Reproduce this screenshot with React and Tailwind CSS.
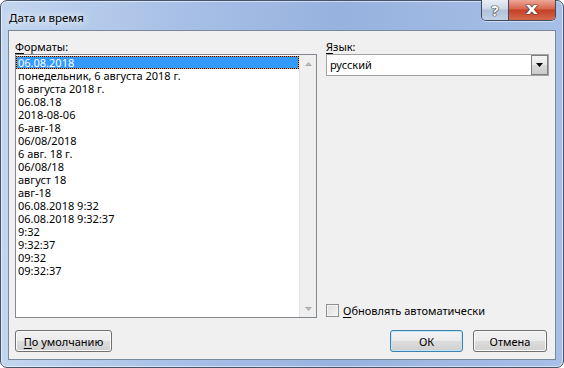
import React from "react";

const items = [
  "06.08.2018",
  "понедельник, 6 августа 2018 г.",
  "6 августа 2018 г.",
  "06.08.18",
  "2018-08-06",
  "6-авг-18",
  "06/08/2018",
  "6 авг. 18 г.",
  "06/08/18",
  "август 18",
  "авг-18",
  "06.08.2018 9:32",
  "06.08.2018 9:32:37",
  "9:32",
  "9:32:37",
  "09:32",
  "09:32:37",
];

function Arrow({ down }) {
  return (
    <svg width="7" height="4" viewBox="0 0 7 4" className={down ? "rotate-180" : ""}>
      <polygon points="3.5,0 7,4 0,4" fill="#a8a8a8" />
      <polygon points="3.5,1 5.5,3 1.5,3" fill="#bdbdbd" />
    </svg>
  );
}

function Btn({ children, def, className }) {
  return (
    <div
      className={`h-[22px] rounded-[3px] border ${
        def
          ? "border-[#3c7fb1] shadow-[inset_0_0_0_1px_#bfe6fb]"
          : "border-[#707070] shadow-[inset_0_0_0_1px_#fbfbfb]"
      } bg-[linear-gradient(to_bottom,#f2f2f2_0%,#ebebeb_50%,#dddddd_50%,#cfcfcf_100%)] flex items-center justify-center text-[11px] leading-[15px] text-black ${className}`}
    >
      {children}
    </div>
  );
}

export default function App() {
  return (
    <div className="w-[564px] h-[368px] bg-white font-['Noto_Sans','Open_Sans',sans-serif] text-[11px] text-black">
      <div className="w-full h-full rounded-[7px] border border-[#44546c] shadow-[inset_0_0_0_1px_rgba(255,255,255,0.55)] bg-[linear-gradient(90deg,#c3d6ef_0%,#a9c1e7_30%,#97b2df_60%,#a6bfe6_100%)] px-[7px] pb-[7px] flex flex-col">
        {/* Title bar */}
        <div className="h-[29px] flex justify-between items-start">
          <div className="pl-px mt-[9px] leading-[15px] text-[11.5px] text-black [text-shadow:0_0_6px_rgba(255,255,255,0.95),0_0_10px_rgba(255,255,255,0.8)]">
            Дата и время
          </div>
          <div className="-mt-px flex h-[21px] rounded-b-[5px] border border-t-0 border-[#3d4a5e] overflow-hidden shadow-[0_1px_0_rgba(255,255,255,0.5)]">
            <div className="w-[27px] h-full flex items-center justify-center bg-[linear-gradient(to_bottom,#e8eef6_0%,#cdd8e7_45%,#b0c1d8_50%,#c3d2e6_100%)] border-r border-[#3d4a5e] text-white font-bold text-[15px] leading-none [text-shadow:0_0_1px_#222,0_0_1px_#222,0_0_1px_#222]">
              ?
            </div>
            <div className="w-[46px] h-full flex items-center justify-center bg-[linear-gradient(to_bottom,#eba797_0%,#d8654d_45%,#c43f26_50%,#d66a4c_100%)] text-white font-bold text-[15px] leading-none [text-shadow:0_0_1px_#222,0_0_1px_#222,0_0_1px_#222]">
              <span className="font-['DejaVu_Sans',sans-serif] scale-x-125 -mt-[2px]">x</span>
            </div>
          </div>
        </div>

        {/* Client area */}
        <div className="flex-1 border border-[#7a889c] bg-[#f0f0f0] flex flex-col pt-[8px] pl-[6px] pr-[6px] pb-[7px]">
          <div className="flex-1 grid grid-cols-[302px_223px] gap-x-[9px]">
            {/* Left column */}
            <div className="flex flex-col">
              <div className="h-[15px] leading-[15px]">
                <span className="underline underline-offset-2">Ф</span>
                <span>орматы:</span>
              </div>
              <div className="h-[264px] border border-[#828790] bg-white flex">
                <div className="flex-1 pt-px">
                  {items.map((t, i) =>
                    i === 0 ? (
                      <div
                        key={i}
                        className="h-[13px] border border-dotted border-black bg-[#f29a2e]"
                      >
                        <div className="h-full bg-[#3399ff] text-white leading-[11px] pl-px whitespace-nowrap">
                          {t}
                        </div>
                      </div>
                    ) : (
                      <div key={i} className="h-[13px] leading-[13px] pl-[2px] whitespace-nowrap">
                        {t}
                      </div>
                    )
                  )}
                </div>
                <div className="w-[17px] bg-[#efefef] border-l border-[#e4e4e4] flex flex-col justify-between">
                  <div className="h-[17px] flex items-center justify-center">
                    <Arrow />
                  </div>
                  <div className="h-[17px] flex items-center justify-center">
                    <Arrow down />
                  </div>
                </div>
              </div>
            </div>

            {/* Right column */}
            <div className="flex flex-col">
              <div className="h-[15px] leading-[15px]">
                <span className="underline underline-offset-2">Я</span>
                <span>зык:</span>
              </div>
              <div className="h-[22px] border border-[#a3a3a3] bg-white flex items-stretch">
                <div className="flex-1 pl-[3px] leading-[20px]">русский</div>
                <div className="w-[17px] border border-[#7d7d7d] bg-[linear-gradient(to_bottom,#f4f4f4_0%,#e8e8e8_50%,#d9d9d9_50%,#cbcbcb_100%)] flex items-center justify-center">
                  <svg width="7" height="4" viewBox="0 0 7 4">
                    <polygon points="0,0 7,0 3.5,4" fill="#000" />
                  </svg>
                </div>
              </div>
              <div className="flex-1" />
              <div className="flex items-center gap-[4px] mb-px h-[13px]">
                <div className="w-[13px] h-[13px] border border-[#8e8f8f] bg-[linear-gradient(135deg,#dcdcdc_0%,#f7f7f7_100%)] shadow-[inset_0_0_0_1px_#f4f4f4]" />
                <div className="leading-[15px]">
                  <span className="underline underline-offset-2">О</span>
                  <span>бновлять автоматически</span>
                </div>
              </div>
            </div>
          </div>

          {/* Bottom buttons */}
          <div className="mt-[12px] flex justify-between items-center pr-[2px]">
            <Btn className="w-[97px]">
              <span>
                <span className="underline underline-offset-2">П</span>
                <span>о умолчанию</span>
              </span>
            </Btn>
            <div className="flex gap-[10px]">
              <Btn def className="w-[73px]">
                ОК
              </Btn>
              <Btn className="w-[74px]">Отмена</Btn>
            </div>
          </div>
        </div>
      </div>
    </div>
  );
}
